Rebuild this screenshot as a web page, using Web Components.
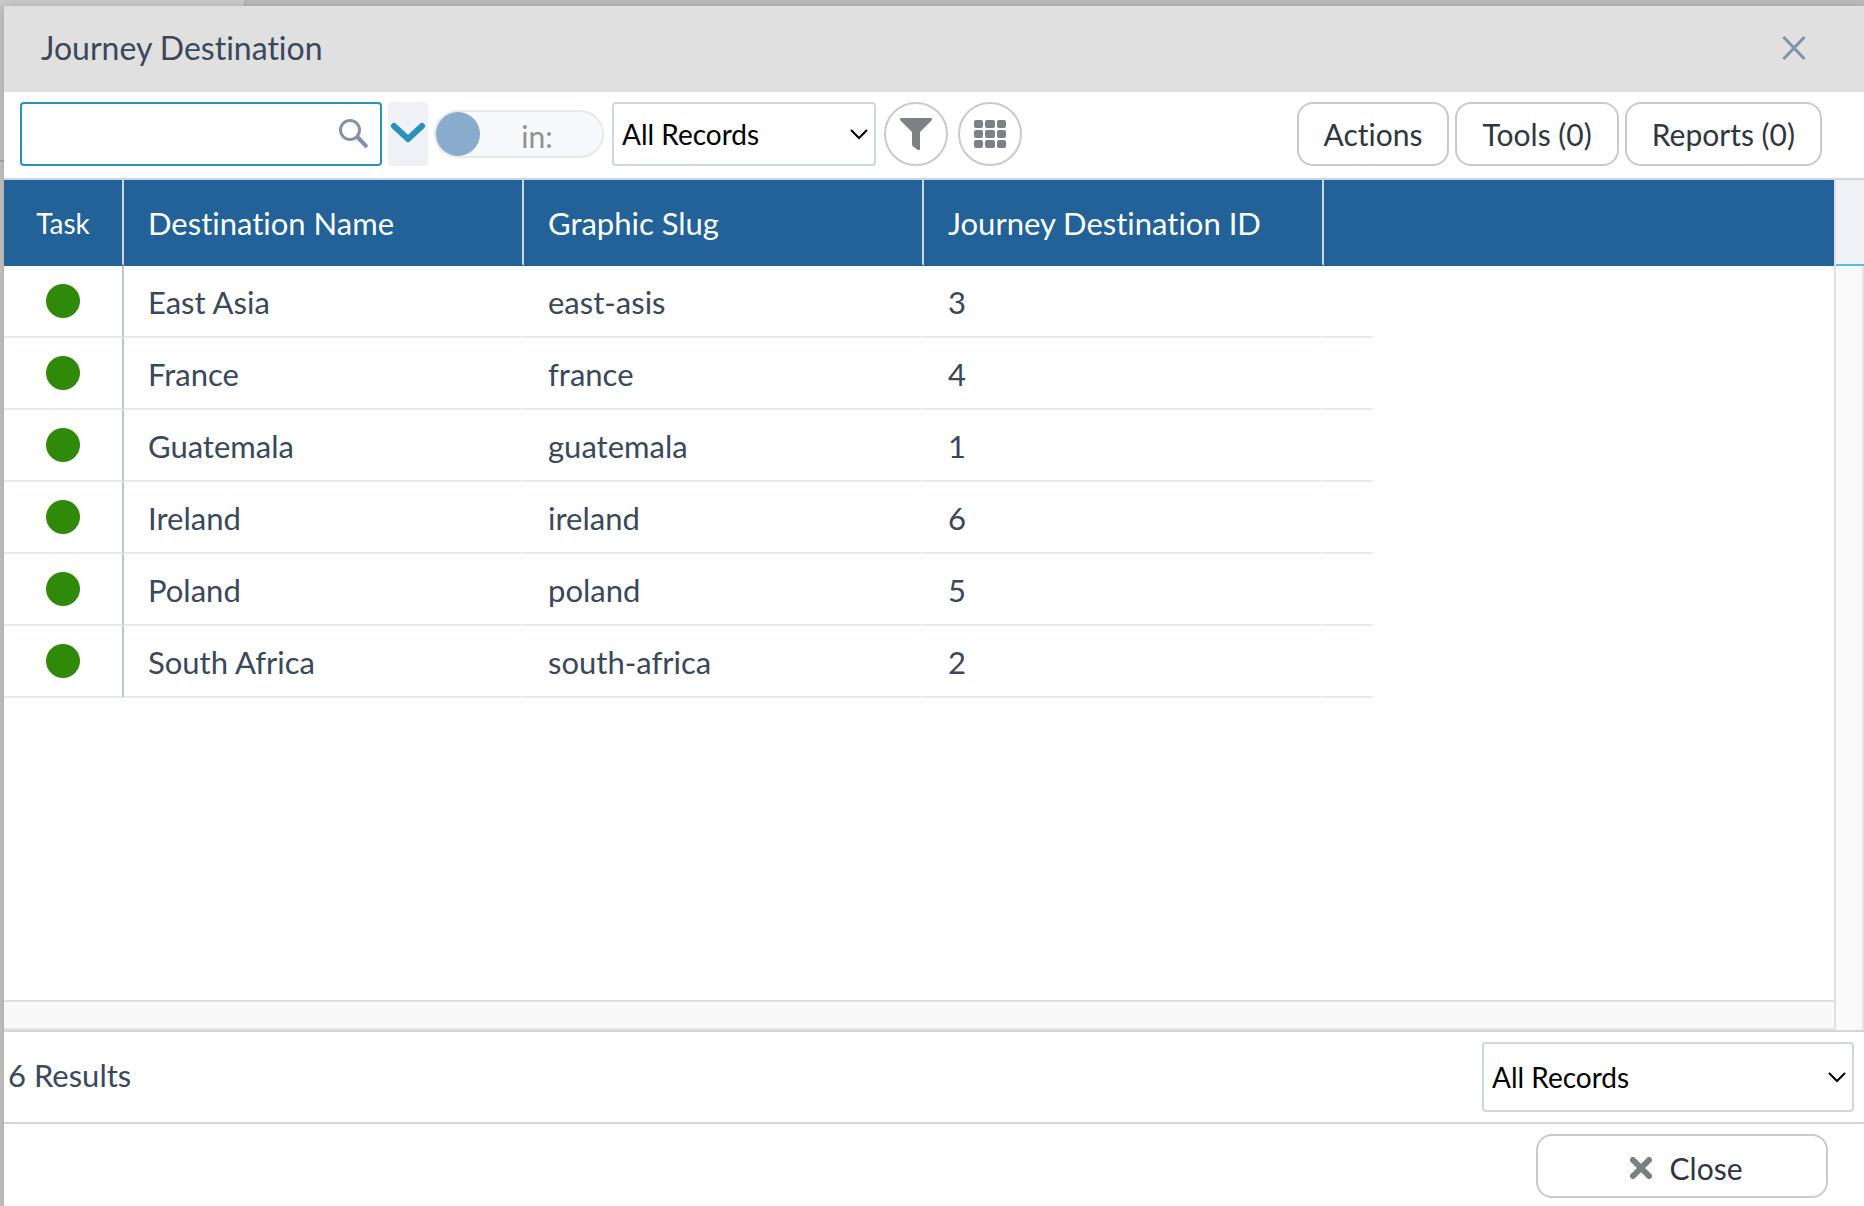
<!DOCTYPE html>
<html lang="en">
<head>
<meta charset="utf-8">
<meta name="viewport" content="width=device-width, initial-scale=1">
<title>Journey Destination</title>
<style>
  html, body { height: 100%; margin: 0; }
  body { overflow: hidden; font-family: Lato, "Liberation Sans", sans-serif; font-size: 30px; font-variant-ligatures: none; color: #3b475a; }
</style>
</head>
<body>
<record-browser></record-browser>

<template id="record-browser">
  <style>
    :host { display: flex; height: 100%; box-sizing: border-box; padding: 6px 0 0 4px;
      background: linear-gradient(#a2a5a8, #a2a5a8) 0 160px / 4px 2px no-repeat,
        linear-gradient(100deg, #cbcbcb 241px, #b0b0b0 241px, #b0b0b0 243px, #bdbdbd 243px) 0 0 / 100% 6px no-repeat, #c4c3c2; }
    dialog-panel { flex: 1; min-width: 0; }
  </style>
  <dialog-panel heading="Journey Destination">
    <grid-toolbar></grid-toolbar>
    <record-grid></record-grid>
    <result-bar count="6"></result-bar>
    <pill-button slot="actions" wide>
      <svg slot="icon" width="22" height="22" viewBox="0 0 22 22" aria-hidden="true"><path d="M3 3 19 19M19 3 3 19" stroke="#7b7f83" stroke-width="6" stroke-linecap="round"/></svg>Close</pill-button>
  </dialog-panel>
</template>

<template id="dialog-panel">
  <style>
    :host { display: flex; flex-direction: column; background: #fff; box-shadow: 0 0 10px rgba(0,0,0,.16); }
    header { display: flex; align-items: center; justify-content: space-between; box-sizing: border-box; height: 86px; padding: 0 56px 2px 37px; background: #e0e0e0; flex: none; }
    h1 { margin: 0; font-size: 32px; line-height: 40px; font-weight: 400; }
    button { display: flex; padding: 0; border: 0; background: none; }
    main { flex: 1; min-height: 0; display: flex; flex-direction: column; }
    footer { display: flex; justify-content: flex-end; padding: 10px 36px 8px; }
  </style>
  <header>
    <h1></h1>
    <button type="button" aria-label="Close dialog"><svg width="28" height="28" viewBox="0 0 28 28" fill="none" stroke="#8392a7" stroke-width="3"><path d="M3.500 3 24.500 25M24.500 3 3.500 25"/></svg></button>
  </header>
  <main><slot></slot></main>
  <footer><slot name="actions"></slot></footer>
</template>

<template id="grid-toolbar">
  <style>
    :host { display: flex; align-items: center; padding: 10px 42px 12px 16px; border-bottom: 2px solid #d0d6da; }
    quick-search { margin-right: 6px; }
    scope-switch { margin: 0 8px 0 6px; }
    record-select { width: 264px; margin-right: 8px; }
    .rounds { display: flex; gap: 10px; }
    .buttons { display: flex; gap: 6px; margin-left: auto; }
    .expand { display: grid; place-items: center; width: 40px; height: 64px; padding: 0 0 2px; border: 0; border-radius: 4px; background: #eff1f7; }
  </style>
  <quick-search></quick-search>
  <button class="expand" type="button" aria-label="Search options"><svg width="36" height="24" viewBox="0 0 36 24" fill="none" stroke="#2892b8" stroke-width="6" stroke-linecap="round" stroke-linejoin="round"><path d="M4 5 18 18 32 5"/></svg></button>
  <scope-switch></scope-switch>
  <record-select label="Record set"></record-select>
  <div class="rounds">
    <round-button label="Filter"><svg width="32" height="32" viewBox="0 0 32 32" fill="#7b8185"><path d="M1 0H31Q33 1 31 3L20 14V31Q20 33 18 32L13 28.500Q12 28 12 26V14L1 3Q-1 1 1 0Z"/></svg></round-button>
    <round-button label="Grid view"><svg width="32" height="28" viewBox="0 0 32 28" fill="#7b8185"><rect width="9" height="8" rx="2"/><rect x="11" width="10" height="8" rx="2"/><rect x="23" width="9" height="8" rx="2"/><rect y="10" width="9" height="8" rx="2"/><rect x="11" y="10" width="10" height="8" rx="2"/><rect x="23" y="10" width="9" height="8" rx="2"/><rect y="20" width="9" height="8" rx="2"/><rect x="11" y="20" width="10" height="8" rx="2"/><rect x="23" y="20" width="9" height="8" rx="2"/></svg></round-button>
  </div>
  <div class="buttons">
    <pill-button>Actions</pill-button>
    <pill-button>Tools (0)</pill-button>
    <pill-button>Reports (0)</pill-button>
  </div>
</template>

<template id="quick-search">
  <style>
    :host { display: flex; align-items: center; box-sizing: border-box; width: 362px; height: 64px; padding: 0 12px 2px 0; border: 2px solid #2892b8; border-radius: 4px; background: #fff; }
    input { flex: 1; min-width: 0; height: 56px; padding: 0 12px; border: 0; outline: 0; background: none; font: inherit; color: inherit; }
    svg { flex: none; }
  </style>
  <input type="search" aria-label="Search records">
  <svg width="30" height="32" viewBox="0 0 30 32" fill="none" stroke="#8392a7" aria-hidden="true"><circle cx="12" cy="13" r="9.500" stroke-width="3"/><path d="M19 19.500 29 30" stroke-width="4"/></svg>
</template>

<template id="scope-switch">
  <style>
    :host { display: block; }
    label { display: flex; align-items: center; box-sizing: border-box; width: 170px; height: 48px; border: 2px solid #e6eaea; border-radius: 24px; background: #f8f9fc; color: #8e9295; font-size: 30px; line-height: 36px; }
    input { appearance: none; flex: none; width: 44px; height: 44px; margin: 0; border-radius: 50%; background: #89accd; }
    span { flex: 1; padding: 4px 8px 0 0; text-align: center; }
  </style>
  <label><input type="checkbox" role="switch"><span>in:</span></label>
</template>

<template id="record-select">
  <style>
    :host { display: grid; }
    select, svg { grid-area: 1 / 1; }
    select { appearance: none; box-sizing: border-box; width: 100%; height: 64px; padding: 0 40px 0 8px; border: 2px solid #d0d6da; border-radius: 4px; background: #fff; color: #000; font: inherit; font-size: 28px; }
    :host([tall]) select { height: 70px; }
    svg { place-self: center end; margin-right: 8px; pointer-events: none; }
  </style>
  <select><option>All Records</option></select>
  <svg width="18" height="12" viewBox="0 0 18 12" fill="none" stroke="#000" stroke-width="2" aria-hidden="true"><path d="M1 2 9 10 17 2"/></svg>
</template>

<template id="round-button">
  <style>
    :host { display: block; }
    button { display: grid; place-items: center; width: 64px; height: 64px; padding: 0; border: 2px solid #c9cacb; border-radius: 50%; background: #fff; }
  </style>
  <button type="button"><slot></slot></button>
</template>

<template id="pill-button">
  <style>
    :host { display: block; }
    button { display: flex; align-items: center; justify-content: center; gap: 18px; height: 64px; padding: 0 25px; border: 2px solid #c9cacb; border-radius: 16px; background: #fff; color: #2f363f; font: inherit; font-size: 30px; line-height: 36px; white-space: nowrap; }
    :host([wide]) button { width: 292px; padding: 4px 16px 0 24px; }
  </style>
  <button type="button"><slot name="icon"></slot><span><slot></slot></span></button>
</template>

<template id="record-grid">
  <style>
    :host { flex: 1; min-height: 0; display: grid; grid-template-columns: 1fr 30px; grid-template-rows: 1fr 30px; }
    .view { min-width: 0; overflow: hidden; }
    table { width: 100%; table-layout: fixed; border-collapse: separate; border-spacing: 0; font-size: 31px; line-height: 36px; }
    .task { width: 120px; } .data { width: 400px; } .tail { width: 50px; }
    th, td { box-sizing: border-box; padding: 2px 24px 0; text-align: left; font-weight: 400; white-space: nowrap; }
    th { height: 86px; border-right: 2px solid #ccd3d9; border-bottom: 2px solid #226298; background: #226298; color: #fff; }
    th:last-child { border-right-color: #226298; }
    td { height: 72px; border-right: 2px solid #fff; border-bottom: 2px solid #e6eaea; }
    td:first-child { border-right-color: #bfc7cb; padding: 0; }
    td:last-child { border-bottom-color: transparent; }
    th:first-child { padding: 2px 0 0; text-align: center; font-size: 28px; }
    i { display: block; width: 34px; height: 34px; margin: 0 auto; border-radius: 50%; background: #2f8a0a; }
    .vbar { display: flex; flex-direction: column; grid-row: 1 / 3; grid-column: 2; border-left: 2px solid #e0e0e0; }
    .cap { height: 84px; background: #eff1f7; border-bottom: 2px solid #58bfe3; }
    .track { flex: 1; background: #fafafa; border-right: 2px solid #e5e5e5; }
    .hbar { background: #f9f9f9; border-top: 2px solid #e0e0e0; border-bottom: 2px solid #e5e5e5; box-sizing: border-box; }
  </style>
  <div class="view">
    <table>
      <colgroup><col class="task"><col class="data"><col class="data"><col class="data"><col class="tail"><col></colgroup>
      <thead><tr><th>Task</th><th>Destination Name</th><th>Graphic Slug</th><th>Journey Destination ID</th><th colspan="2"></th></tr></thead>
      <tbody></tbody>
    </table>
  </div>
  <div class="vbar"><div class="cap"></div><div class="track"></div></div>
  <div class="hbar"></div>
</template>

<template id="result-bar">
  <style>
    :host { display: flex; align-items: center; justify-content: space-between; padding: 10px 10px 10px 4px; border: solid #d0d6da; border-width: 2px 0; }
    record-select { width: 372px; }
    output { padding-bottom: 4px; font-size: 31px; line-height: 36px; }
  </style>
  <output></output>
  <record-select label="Show records" tall></record-select>
</template>

<script>
  class TemplateElement extends HTMLElement {
    connectedCallback() {
      if (this.shadowRoot) return;
      const root = this.attachShadow({ mode: "open" });
      root.append(document.getElementById(this.localName).content.cloneNode(true));
      this.ready(root);
    }
    ready() {}
  }

  customElements.define("pill-button", class extends TemplateElement {});
  customElements.define("quick-search", class extends TemplateElement {});
  customElements.define("scope-switch", class extends TemplateElement {});
  customElements.define("grid-toolbar", class extends TemplateElement {});

  customElements.define("round-button", class extends TemplateElement {
    ready(root) { root.querySelector("button").setAttribute("aria-label", this.getAttribute("label")); }
  });

  customElements.define("record-select", class extends TemplateElement {
    ready(root) { root.querySelector("select").setAttribute("aria-label", this.getAttribute("label")); }
  });

  customElements.define("record-grid", class extends TemplateElement {
    ready(root) {
      const records = [
        ["East Asia", "east-asis", 3],
        ["France", "france", 4],
        ["Guatemala", "guatemala", 1],
        ["Ireland", "ireland", 6],
        ["Poland", "poland", 5],
        ["South Africa", "south-africa", 2],
      ];
      const body = root.querySelector("tbody");
      for (const record of records) {
        const row = body.insertRow();
        row.insertCell().append(document.createElement("i"));
        for (const value of record) row.insertCell().textContent = value;
        row.insertCell();
        row.insertCell();
      }
    }
  });

  customElements.define("result-bar", class extends TemplateElement {
    ready(root) { root.querySelector("output").textContent = this.getAttribute("count") + " Results"; }
  });

  customElements.define("dialog-panel", class extends TemplateElement {
    ready(root) { root.querySelector("h1").textContent = this.getAttribute("heading"); }
  });

  customElements.define("record-browser", class extends TemplateElement {});
</script>
</body>
</html>
